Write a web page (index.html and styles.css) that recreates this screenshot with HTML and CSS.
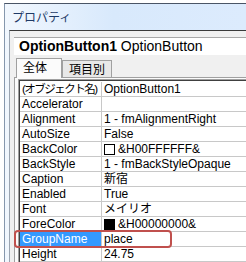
FILE: index.html
```html
<!DOCTYPE html>
<html lang="ja">
<head>
  <meta charset="UTF-8">
  <title>プロパティ</title>
  <link rel="stylesheet" href="styles.css">
</head>
<body>

  <div class="window">
    <div class="titlebar">プロパティ</div>

    <div class="client">
      <div class="objsel"><b>OptionButton1</b> OptionButton</div>

      <div class="tabs">
        <span class="tab active">全体</span>
        <span class="tab">項目別</span>
      </div>

      <div class="page">
        <div class="grid">
          <div class="row"><div class="name narrow">(オブジェクト名)</div><div class="value">OptionButton1</div></div>
          <div class="row"><div class="name">Accelerator</div><div class="value"></div></div>
          <div class="row"><div class="name">Alignment</div><div class="value">1 - fmAlignmentRight</div></div>
          <div class="row"><div class="name">AutoSize</div><div class="value">False</div></div>
          <div class="row"><div class="name">BackColor</div><div class="value"><span class="swatch white"></span>&amp;H00FFFFFF&amp;</div></div>
          <div class="row"><div class="name">BackStyle</div><div class="value">1 - fmBackStyleOpaque</div></div>
          <div class="row"><div class="name">Caption</div><div class="value">新宿</div></div>
          <div class="row"><div class="name">Enabled</div><div class="value">True</div></div>
          <div class="row"><div class="name">Font</div><div class="value">メイリオ</div></div>
          <div class="row"><div class="name">ForeColor</div><div class="value"><span class="swatch black"></span>&amp;H00000000&amp;</div></div>
          <div class="row selected"><div class="name">GroupName</div><div class="value">place</div><div class="mark"></div></div>
          <div class="row"><div class="name">Height</div><div class="value">24.75</div></div>
        </div>
      </div>
    </div>
  </div>

</body>
</html>
```

FILE: styles.css
```css
html, body {
  height: 262px;
}

body {
  margin: 0;
  background-color: #ffffff;
  color: #000000;
  font-family: 'Liberation Sans', 'Noto Sans CJK JP', sans-serif;
  font-size: 12px;
  overflow: hidden;
}

.window {
  margin: 3px 0 0 4px;
  height: 258px;
  border-top: 1px solid #4a5566;
  border-left: 1px solid #8597ad;
  background: linear-gradient(to right, #f1f7fe, #d8e9fc 45%, #dcebfd);
  padding-left: 4px;
  display: flex;
  flex-direction: column;
  overflow: hidden;
}

.titlebar {
  height: 26px;
  line-height: 26px;
  padding-left: 3px;
  color: #1e3a66;
  font-family: 'Noto Sans CJK JP', sans-serif;
}

.client {
  flex: 1;
  min-height: 0;
  display: flex;
  flex-direction: column;
  background-color: #f0f0f0;
  border-top: 1px solid #3a3a3a;
  border-left: 1px solid #9aa4b0;
  padding: 6px 0 0 4px;
  overflow: hidden;
}

.objsel {
  height: 17px;
  line-height: 17px;
  background-color: #ffffff;
  border-top: 1px solid #a8a8a8;
  padding-left: 5px;
  font-size: 14px;
}

.tabs {
  display: flex;
  align-items: flex-end;
  height: 22px;
  padding-left: 2px;
}

.tab {
  height: 16px;
  line-height: 16px;
  padding: 0 6px;
  border: 1px solid #a0a0a0;
  border-bottom: none;
  background-color: #e8e8e8;
  font-family: 'Noto Sans CJK JP', sans-serif;
}

.tab.active {
  height: 19px;
  width: 32px;
  background-color: #fbfbfb;
  margin-bottom: -1px;
  position: relative;
}

.page {
  flex: 1;
  min-height: 0;
  border-top: 1px solid #a0a0a0;
  border-left: 1px solid #a0a0a0;
  background-color: #fbfbfb;
  padding: 1px 0 0 3px;
}

.grid {
  border-top: 1px solid #a0a0a0;
  border-left: 1px solid #a0a0a0;
  box-shadow: inset 1px 1px 0 #404040;
  padding: 2px 0 0 1px;
  background-color: #ffffff;
}

.row {
  display: grid;
  grid-template-columns: 82px 1fr;
  height: 14px;
  line-height: 14px;
  border-bottom: 1px solid #c8c8c8;
  white-space: nowrap;
}

.name {
  padding-left: 2px;
  border-right: 1px solid #c8c8c8;
  overflow: hidden;
}

.name.narrow {
  font-size: 11.5px;
  letter-spacing: -1.5px;
}

.value {
  padding-left: 2px;
  display: flex;
  align-items: center;
}

.swatch {
  width: 9px;
  height: 9px;
  border: 1px solid #000000;
  margin-right: 3px;
}

.swatch.white {
  background-color: #ffffff;
}

.swatch.black {
  background-color: #000000;
}

.row.selected {
  position: relative;
}

.row.selected .name {
  background-color: #3399ff;
  color: #ffffff;
}

.mark {
  position: absolute;
  left: -6px;
  top: -2px;
  width: 154px;
  height: 14px;
  border: 2px solid #c0504d;
  border-radius: 4px;
}
```
